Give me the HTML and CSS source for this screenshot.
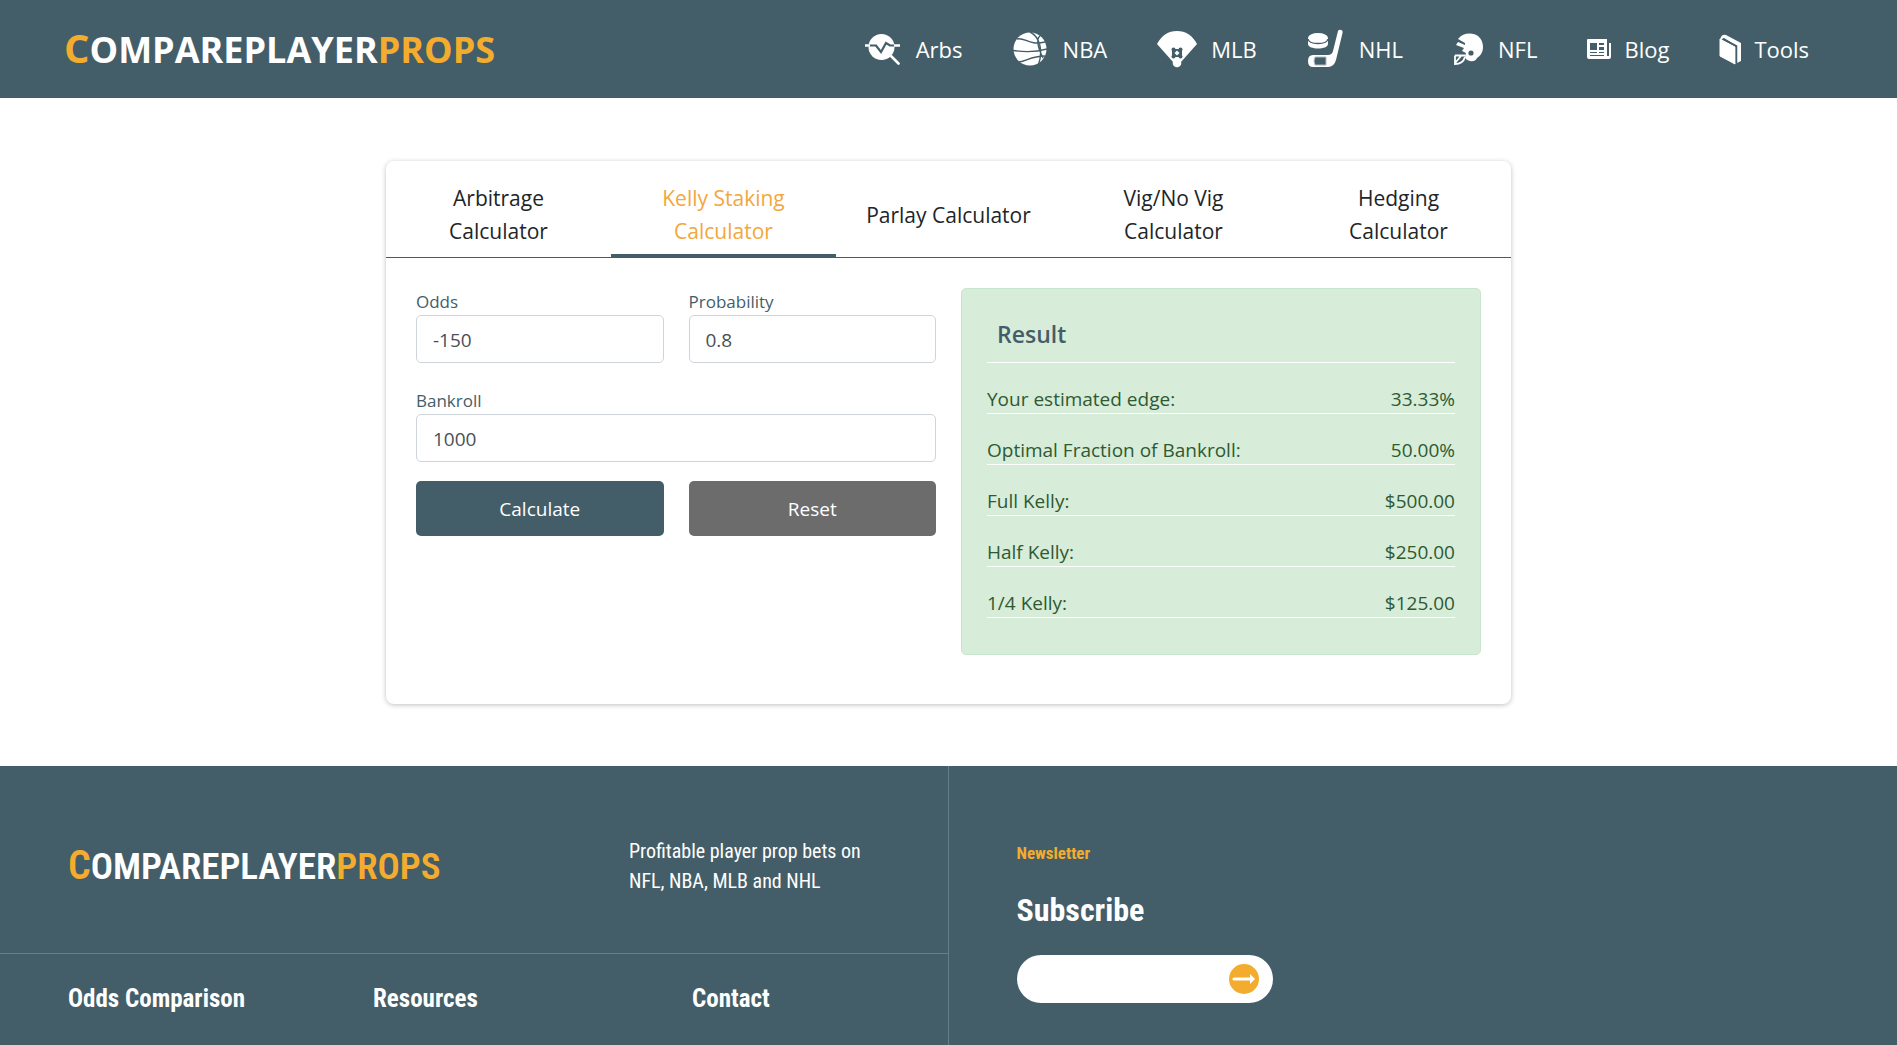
FILE: index.html
```html
<!DOCTYPE html>
<html lang="en">
<head>
<meta charset="utf-8">
<title>Kelly Staking Calculator - ComparePlayerProps</title>
<link rel="stylesheet" href="styles.css">
</head>
<body>
<header class="site-header">
  <a class="logo" href="#"><span class="logo-initial">C</span>OMPAREPLAYER<span class="accent">PROPS</span></a>
  <nav class="main-nav" aria-label="Main">
    <a href="#"><svg width="35" height="31" viewBox="0 0 35 31"><circle cx="16.500" cy="13" r="13" fill="#fff"/><path d="M3 11.500H11L16 18L21 9L25 11.500H31" fill="none" stroke="#435e69" stroke-width="2.200"/><path d="M0 11.500H5M29 11.500H35" stroke="#fff" stroke-width="2.400"/><path d="M26 22L33.500 29.500" stroke="#fff" stroke-width="2.600" stroke-linecap="round"/></svg><span class="gap-l">Arbs</span></a>
    <a href="#"><svg width="34" height="34" viewBox="0 0 34 34"><circle cx="17" cy="17" r="16.500" fill="#fff"/><path d="M4 7C12 5 16 14 32 10M0 18.500C10 20 24 20 34 17M6 30C14 29 18 24 32 24M17 0C26 4 31 18 25 34M28 3C23 6 24 14 30 26" fill="none" stroke="#435e69" stroke-width="1.400"/></svg><span class="gap-l">NBA</span></a>
    <a href="#"><svg width="40" height="37" viewBox="0 0 40 37"><path d="M0 13Q7 0 20 0T40 13L24 31H16Z" fill="#fff"/><g fill="#435e69"><path d="M17 18H23L25 20V24L23 26H17L15 24V20Z"/><circle cx="16.500" cy="18.500" r="2"/><circle cx="23.500" cy="18.500" r="2"/><circle cx="16.500" cy="25.500" r="2"/><circle cx="23.500" cy="25.500" r="2"/></g><path d="M20 19.500L22.500 22L20 24.500L17.500 22Z" fill="#fff"/><circle cx="20" cy="32" r="4.300" fill="#fff"/></svg><span class="gap-m">MLB</span></a>
    <a href="#"><svg width="38" height="40" viewBox="0 0 38 40"><path d="M1 9V15C1 21 21 21 21 15V9Z" fill="#fff"/><ellipse cx="11" cy="9" rx="10" ry="5" fill="#fff"/><path d="M1 10C2 16 20 16 21 10" fill="none" stroke="#435e69" stroke-width="1.500"/><path d="M31 2Q32 0 34 1Q36 1 35.500 4L29 31Q27 38 21 38H6Q1 38 1 32Q1 26 6 26H21Q25 26 26 22Z" fill="#fff"/><path d="M8 28H19V36H8Q6 32 8 28Z" fill="#435e69" stroke="#aebac0"/></svg><span class="gap-m">NHL</span></a>
    <a href="#"><svg width="31" height="33" viewBox="0 0 31 33"><path d="M5 6C12-3 30-1 30 14C30 20 27 23 24 25Q22 29 17 28Q12 27 12 23L13 20L9 18L11 15L3 12L5 9L12 12V10Z" fill="#fff"/><circle cx="18" cy="20" r="2.600" fill="#435e69"/><path d="M2 22.500H12M2 22.500V31Q10 31 12 24M2 30L8 23" fill="none" stroke="#fff" stroke-width="1.800"/></svg><span class="gap-m">NFL</span></a>
    <a href="#"><svg width="25" height="21" viewBox="0 0 25 21"><path fill="#fff" fill-rule="evenodd" d="M1 0H20V17H22V4H24V18Q24 20 22 20H2Q0 20 0 18V1Q0 0 1 0ZM3 4V11H10V4ZM12 4V6H17V4ZM12 8V11H17V8ZM3 13V14H10V13ZM12 13V14H17V13ZM3 16V17H17V16Z"/></svg><span>Blog</span></a>
    <a href="#"><svg width="23" height="31" viewBox="0 0 23 31"><path d="M1 5L16 13V30L1 22Z" fill="#fff" stroke="#fff" stroke-linejoin="round"/><path d="M1 6Q2 0 7 1L22 9V27L18 29V12L5 4Z" fill="#fff"/><path d="M4 5L17.500 12V29" fill="none" stroke="#435e69" stroke-width="1.500"/></svg><span>Tools</span></a>
  </nav>
</header>

<main class="page">
  <section class="card">
    <nav class="tabs" aria-label="Calculators">
      <a href="#">Arbitrage Calculator</a>
      <a class="active" href="#" aria-current="page">Kelly Staking Calculator</a>
      <a href="#">Parlay Calculator</a>
      <a href="#">Vig/No Vig Calculator</a>
      <a href="#">Hedging Calculator</a>
    </nav>
    <div class="calculator">
      <form class="form">
        <div class="field"><label for="odds">Odds</label><input id="odds" type="text" value="-150"></div>
        <div class="field"><label for="probability">Probability</label><input id="probability" type="text" value="0.8"></div>
        <div class="field wide"><label for="bankroll">Bankroll</label><input id="bankroll" type="text" value="1000"></div>
        <button class="btn primary" type="button">Calculate</button>
        <button class="btn" type="reset">Reset</button>
      </form>
      <section class="result">
        <h2>Result</h2>
        <dl>
          <div><dt>Your estimated edge:</dt><dd>33.33%</dd></div>
          <div><dt>Optimal Fraction of Bankroll:</dt><dd>50.00%</dd></div>
          <div><dt>Full Kelly:</dt><dd>$500.00</dd></div>
          <div><dt>Half Kelly:</dt><dd>$250.00</dd></div>
          <div><dt>1/4 Kelly:</dt><dd>$125.00</dd></div>
        </dl>
      </section>
    </div>
  </section>
</main>

<footer class="site-footer">
  <div class="footer-main">
    <div class="footer-brand">
      <a class="footer-logo" href="#"><span class="footer-initial">C</span>OMPAREPLAYER<span class="accent">PROPS</span></a>
      <p>Profitable player prop bets on NFL, NBA, MLB and NHL</p>
    </div>
    <div class="footer-links">
      <h3>Odds Comparison</h3>
      <h3>Resources</h3>
      <h3>Contact</h3>
    </div>
  </div>
  <form class="newsletter">
    <p class="eyebrow">Newsletter</p>
    <h2><label for="email">Subscribe</label></h2>
    <div class="subscribe">
      <input id="email" type="email">
      <button type="button" aria-label="Subscribe"><svg width="30" height="30" viewBox="0 0 30 30"><circle cx="15" cy="15" r="15" fill="#f3ac2d"/><path d="M5 15H22" stroke="#fff" stroke-width="3" stroke-linecap="round"/><path d="M21 10L26 15L21 20Z" fill="#fff"/></svg></button>
    </div>
  </form>
</footer>
</body>
</html>
```
FILE: styles.css
```css
* { box-sizing: border-box; }

body {
  margin: 0;
  background: #fff;
  color: #212529;
  font-family: "Open Sans", "Noto Sans", sans-serif;
}

a { color: inherit; text-decoration: none; }
h2, h3, p, dl, dd { margin: 0; }
svg { display: block; flex: none; }
.accent { color: #f3ac2d; }

.site-header {
  display: flex;
  align-items: center;
  justify-content: space-between;
  height: 98px;
  padding: 0 88px 0 64px;
  background: #435e69;
  color: #fff;
}

.logo { font-size: 36px; font-weight: 700; line-height: 48px; }
.logo-initial { color: #f3ac2d; font-size: 40px; }

.main-nav { display: flex; align-items: center; gap: 50px; font-size: 22px; }
.main-nav a { display: flex; align-items: center; gap: 12px; }
.gap-l { padding-left: 4px; }
.gap-m { padding-left: 2px; }

.page { padding: 63px 20px 62px; }

.card {
  max-width: 1125px;
  min-height: 543px;
  margin: 0 auto;
  border-radius: 8px;
  box-shadow: 0 1px 5px rgba(0, 0, 0, 0.25);
}

.tabs {
  display: grid;
  grid-template-columns: repeat(5, 1fr);
  border-bottom: 1px solid #435e69;
  font-size: 21px;
  line-height: 33px;
  text-align: center;
}
.tabs a {
  display: flex;
  align-items: center;
  justify-content: center;
  padding: 21px 24px 6px;
  margin-bottom: -1px;
  border-bottom: 4px solid transparent;
}
.tabs .active { color: #f3a73c; border-color: #435e69; }

.calculator {
  display: grid;
  grid-template-columns: 1fr 1fr;
  gap: 25px;
  padding: 30px;
}

.form {
  display: grid;
  grid-template-columns: 1fr 1fr;
  gap: 19px 25px;
  align-content: start;
}
.field { display: grid; min-width: 0; }
.field label { color: #435e69; font-size: 17px; line-height: 27px; }
.field input {
  width: 100%;
  height: 48px;
  margin-bottom: 5px;
  padding: 2px 16px 0;
  border: 1px solid #ced4da;
  border-radius: 5px;
  color: #495057;
  font: inherit;
  font-size: 19px;
}
.wide { grid-column: 1 / -1; }
.wide input { margin-bottom: 0; }

.btn {
  height: 55px;
  border: 0;
  border-radius: 5px;
  background: #6c6c6c;
  color: #fff;
  font: inherit;
  font-size: 19px;
}
.btn.primary { background: #435e69; }

.result {
  padding: 25px;
  min-height: 367px;
  border: 1px solid #c8e6cd;
  border-radius: 5px;
  background: #d7ecd9;
}
.result h2 {
  height: 49px;
  padding: 0 10px;
  border-bottom: 1px solid #fff;
  color: #435e69;
  font-size: 23px;
  font-weight: 600;
  line-height: 40px;
}
.result dl { color: #2e5a32; font-size: 19px; line-height: 27px; }
.result dl div {
  display: flex;
  justify-content: space-between;
  padding-top: 23px;
  border-bottom: 1px solid #fff;
}

.site-footer {
  display: grid;
  grid-template-columns: 1fr 1fr;
  min-height: 279px;
  background: #435e69;
  color: #fff;
  font-family: "Roboto Condensed", "Liberation Sans Narrow", sans-serif;
}
.footer-main { border-right: 1px solid #657f87; }
.footer-brand {
  display: grid;
  grid-template-columns: 561px 1fr;
  align-items: center;
  height: 188px;
  padding: 12px 60px 0 68px;
  border-bottom: 1px solid #657f87;
}
.footer-logo { font-size: 37px; font-weight: 600; }
.footer-initial { color: #f3ac2d; font-size: 40px; }
.footer-brand p { font-size: 20px; line-height: 30px; }
.footer-links {
  display: grid;
  grid-template-columns: 305px 319px 1fr;
  padding: 30px 0 16px 68px;
}
.footer-links h3 { font-size: 25px; font-weight: 700; line-height: 30px; }

.newsletter { padding: 72px 68px 42px; }
.eyebrow { color: #f3ac2d; font-size: 17px; font-weight: 700; line-height: 30px; }
.newsletter h2 { padding-top: 18px; font-size: 32px; font-weight: 700; line-height: 48px; }
.subscribe {
  display: flex;
  align-items: center;
  width: 256px;
  height: 48px;
  margin-top: 21px;
  padding: 0 14px 0 20px;
  border-radius: 24px;
  background: #fff;
}
.subscribe input { flex: 1; min-width: 0; border: 0; outline: 0; background: transparent; font: inherit; }
.subscribe button { padding: 0; border: 0; background: transparent; }
```
